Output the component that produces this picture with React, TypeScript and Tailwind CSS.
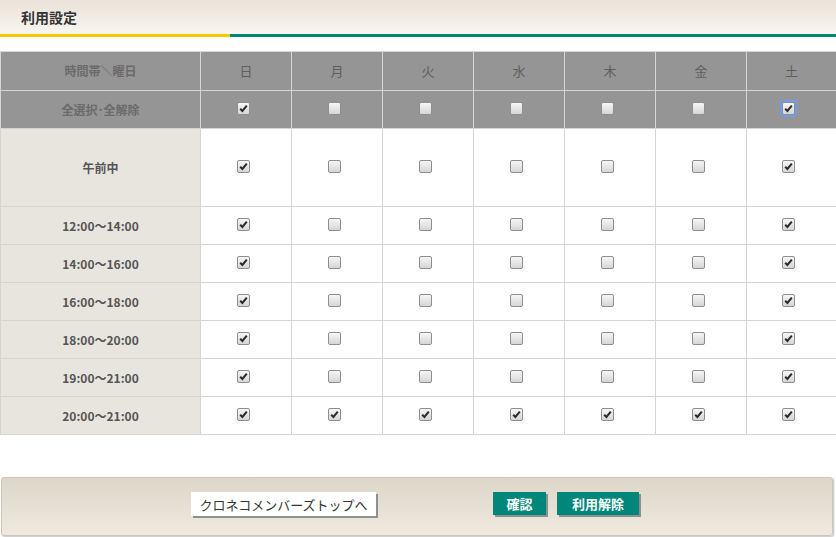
import React from 'react';

const days = ['日', '月', '火', '水', '木', '金', '土'];

const rows: { label: string; tall?: boolean; checks: boolean[] }[] = [
  { label: '午前中', tall: true, checks: [true, false, false, false, false, false, true] },
  { label: '12:00〜14:00', checks: [true, false, false, false, false, false, true] },
  { label: '14:00〜16:00', checks: [true, false, false, false, false, false, true] },
  { label: '16:00〜18:00', checks: [true, false, false, false, false, false, true] },
  { label: '18:00〜20:00', checks: [true, false, false, false, false, false, true] },
  { label: '19:00〜21:00', checks: [true, false, false, false, false, false, true] },
  { label: '20:00〜21:00', checks: [true, true, true, true, true, true, true] },
];

const Check = ({ checked, focus }: { checked: boolean; focus?: boolean }) => (
  <span
    className={`inline-flex items-center justify-center w-[13px] h-[13px] mr-[6px] mb-[4px] rounded-[2px] border border-[#8e8e8e] bg-gradient-to-b from-[#f6f6f6] to-[#d6d6d6] align-middle ${
      focus ? 'outline outline-2 outline-[#6f9ee8] outline-offset-0' : ''
    }`}
  >
    {checked && (
      <svg width="9" height="9" viewBox="0 0 9 9">
        <path d="M1.2 4.8 L3.4 7 L7.8 1.6" fill="none" stroke="#2a2a2a" strokeWidth="2" />
      </svg>
    )}
  </span>
);

export default function App() {
  return (
    <div className="w-[836px] h-[537px] bg-white overflow-hidden font-['Noto_Sans_CJK_JP','Noto_Sans',sans-serif]">
      {/* タイトル */}
      <div className="h-[34px] bg-gradient-to-b from-[#e9e3d8] to-[#f8f6f1] flex items-center pl-[21px]">
        <span className="text-[14px] font-bold text-[#333] leading-none">利用設定</span>
      </div>
      <div className="flex h-[3px]">
        <div className="w-[230px] bg-[#f6c900]" />
        <div className="flex-1 bg-[#00877a]" />
      </div>

      <div className="mt-[14px]">
        <table className="w-[836px] table-fixed border-collapse text-[12px]">
          <colgroup>
            <col className="w-[200px]" />
            <col className="w-[91px]" />
            <col className="w-[91px]" />
            <col className="w-[91px]" />
            <col className="w-[91px]" />
            <col className="w-[91px]" />
            <col className="w-[91px]" />
            <col className="w-[90px]" />
          </colgroup>
          <thead>
            <tr className="h-[39px] bg-[#959595]">
              <th className="border border-[#d4d4d4] text-[#6a6a6a] font-bold">時間帯＼曜日</th>
              {days.map((d) => (
                <th key={d} className="border border-[#d4d4d4] text-[#5e5e5e] font-normal text-[13px]">
                  {d}
                </th>
              ))}
            </tr>
            <tr className="h-[38px] bg-[#959595]">
              <th className="border border-[#d4d4d4] text-[#6a6a6a] font-bold">全選択･全解除</th>
              {days.map((d, i) => (
                <th key={d} className="border border-[#d4d4d4]">
                  <Check checked={i === 0 || i === 6} focus={i === 6} />
                </th>
              ))}
            </tr>
          </thead>
          <tbody>
            {rows.map((r) => (
              <tr key={r.label} className={r.tall ? 'h-[78px]' : 'h-[38px]'}>
                <td className="border border-[#d4d4d4] bg-[#e8e5df] text-center font-bold text-[#555]">
                  {r.label}
                </td>
                {r.checks.map((c, i) => (
                  <td key={i} className="border border-[#d4d4d4] text-center">
                    <Check checked={c} />
                  </td>
                ))}
              </tr>
            ))}
          </tbody>
        </table>
      </div>

      {/* ボタンエリア */}
      <div className="mt-[42px] ml-[1px] w-[832px] h-[59px] rounded-[3px] border border-[#cfc6b6] shadow-[1px_1px_2px_rgba(0,0,0,0.25)] bg-gradient-to-b from-[#ddd6c9] to-[#efe9df] flex items-start pt-[14px]">
        <button className="ml-[189px] w-[185px] h-[24px] bg-white text-[13px] text-[#333] shadow-[2px_2px_0_#8f8f8f] leading-none">
          クロネコメンバーズトップへ
        </button>
        <button className="ml-[117px] w-[53px] h-[23px] bg-[#00877a] text-white font-bold text-[13px] shadow-[2px_2px_0_#8f8f8f] leading-none">
          確認
        </button>
        <button className="ml-[11px] w-[82px] h-[23px] bg-[#00877a] text-white font-bold text-[13px] shadow-[2px_2px_0_#8f8f8f] leading-none">
          利用解除
        </button>
      </div>
    </div>
  );
}
